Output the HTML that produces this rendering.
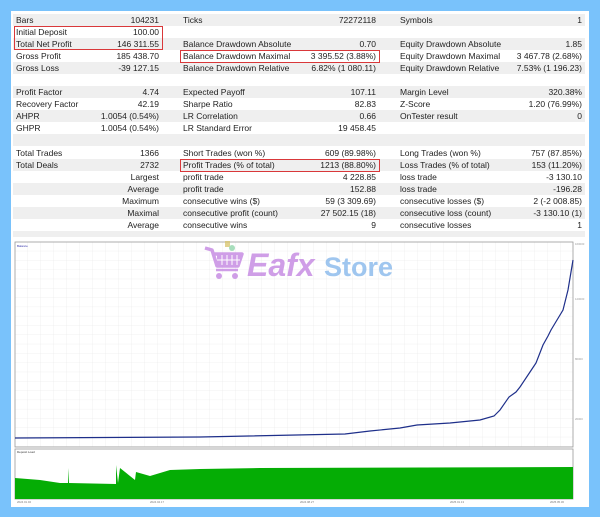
<!DOCTYPE html>
<html><head><style>
*{margin:0;padding:0;box-sizing:border-box}
body{width:600px;height:517px;background:#79c2fb;position:relative;overflow:hidden;font-family:"Liberation Sans",sans-serif;font-size:8.5px;color:#222}
#p{position:absolute;left:11px;top:11px;width:578px;height:496px;background:#fff}
.r{position:absolute;left:13px;width:572px;height:12px;line-height:12px}
.g{background:#efefef}
.r span{position:absolute;white-space:nowrap}
.a{left:3px}.b{right:426px}.c{left:170px}.d{right:209px}.e{left:387px}.f{right:3px}
.box{position:absolute;border:1.3px solid #d9383a}
</style></head><body>
<div id="p"></div>
<div class="r g" style="top:14px"><span class="a">Bars</span><span class="b">104231</span><span class="c">Ticks</span><span class="d">72272118</span><span class="e">Symbols</span><span class="f">1</span></div>
<div class="r" style="top:26px"><span class="a">Initial Deposit</span><span class="b">100.00</span></div>
<div class="r g" style="top:38px"><span class="a">Total Net Profit</span><span class="b">146 311.55</span><span class="c">Balance Drawdown Absolute</span><span class="d">0.70</span><span class="e">Equity Drawdown Absolute</span><span class="f">1.85</span></div>
<div class="r" style="top:50px"><span class="a">Gross Profit</span><span class="b">185 438.70</span><span class="c">Balance Drawdown Maximal</span><span class="d">3 395.52 (3.88%)</span><span class="e">Equity Drawdown Maximal</span><span class="f">3 467.78 (2.68%)</span></div>
<div class="r g" style="top:62px"><span class="a">Gross Loss</span><span class="b">-39 127.15</span><span class="c">Balance Drawdown Relative</span><span class="d">6.82% (1 080.11)</span><span class="e">Equity Drawdown Relative</span><span class="f">7.53% (1 196.23)</span></div>
<div class="r" style="top:74px"></div>
<div class="r g" style="top:86px"><span class="a">Profit Factor</span><span class="b">4.74</span><span class="c">Expected Payoff</span><span class="d">107.11</span><span class="e">Margin Level</span><span class="f">320.38%</span></div>
<div class="r" style="top:98px"><span class="a">Recovery Factor</span><span class="b">42.19</span><span class="c">Sharpe Ratio</span><span class="d">82.83</span><span class="e">Z-Score</span><span class="f">1.20 (76.99%)</span></div>
<div class="r g" style="top:110px"><span class="a">AHPR</span><span class="b">1.0054 (0.54%)</span><span class="c">LR Correlation</span><span class="d">0.66</span><span class="e">OnTester result</span><span class="f">0</span></div>
<div class="r" style="top:122px"><span class="a">GHPR</span><span class="b">1.0054 (0.54%)</span><span class="c">LR Standard Error</span><span class="d">19 458.45</span></div>
<div class="r g" style="top:134px"></div>
<div class="r" style="top:147px"><span class="a">Total Trades</span><span class="b">1366</span><span class="c">Short Trades (won %)</span><span class="d">609 (89.98%)</span><span class="e">Long Trades (won %)</span><span class="f">757 (87.85%)</span></div>
<div class="r g" style="top:159px"><span class="a">Total Deals</span><span class="b">2732</span><span class="c">Profit Trades (% of total)</span><span class="d">1213 (88.80%)</span><span class="e">Loss Trades (% of total)</span><span class="f">153 (11.20%)</span></div>
<div class="r" style="top:171px"><span class="b">Largest</span><span class="c">profit trade</span><span class="d">4 228.85</span><span class="e">loss trade</span><span class="f">-3 130.10</span></div>
<div class="r g" style="top:183px"><span class="b">Average</span><span class="c">profit trade</span><span class="d">152.88</span><span class="e">loss trade</span><span class="f">-196.28</span></div>
<div class="r" style="top:195px"><span class="b">Maximum</span><span class="c">consecutive wins ($)</span><span class="d">59 (3 309.69)</span><span class="e">consecutive losses ($)</span><span class="f">2 (-2 008.85)</span></div>
<div class="r g" style="top:207px"><span class="b">Maximal</span><span class="c">consecutive profit (count)</span><span class="d">27 502.15 (18)</span><span class="e">consecutive loss (count)</span><span class="f">-3 130.10 (1)</span></div>
<div class="r" style="top:219px"><span class="b">Average</span><span class="c">consecutive wins</span><span class="d">9</span><span class="e">consecutive losses</span><span class="f">1</span></div>
<div class="r g" style="top:231px;height:6px"></div>
<div class="box" style="left:14px;top:26px;width:149px;height:24px"></div>
<div class="box" style="left:180px;top:50px;width:200px;height:13px"></div>
<div class="box" style="left:180px;top:159px;width:200px;height:13px"></div>
<svg style="position:absolute;left:0;top:0" width="600" height="517">
<defs><pattern id="gr" width="13" height="9.3" patternUnits="userSpaceOnUse" x="15" y="242"><path d="M13 0V9.3M0 9.3H13" stroke="#e6e6e6" stroke-width="0.6" fill="none"/></pattern></defs>
<rect x="15" y="242" width="558" height="205" fill="url(#gr)" stroke="#999" stroke-width="0.8"/>
<rect x="15" y="449" width="558" height="50" fill="#fff" stroke="#999" stroke-width="0.8"/>
<text x="17" y="247" font-size="3" fill="#33a">Balance</text>
<text x="17" y="453" font-size="3" fill="#333">Deposit Load</text>
<polyline fill="none" stroke="#1e2f8a" stroke-width="1.2" points="15,438 200,437 345,434 370,431 400,428 417,425 450,423 470,421 480,420 494,416 500,410 509,397 516,392 520,387 530,372 536,363 543,345 548,336 551,330 557,320 563,310 568,290 573,260"/>
<path d="M15,478 L40,480 L60,483 L68,483 L68,468 L69,483 L116,484 L116,465 L118,483 L120,468 L135,480 L136,472 L150,476 L170,470 L200,469 L260,468 L573,467 L573,499 L15,499Z" fill="#05ad05"/>
<g fill="#999" font-size="2.8"><text x="575" y="245">160000</text><text x="575" y="300">120000</text><text x="575" y="360">80000</text><text x="575" y="420">20000</text></g>
<g fill="#777" font-size="2.8"><text x="17" y="503">2024.01.02</text><text x="150" y="503">2024.04.17</text><text x="300" y="503">2024.08.27</text><text x="450" y="503">2025.01.13</text><text x="550" y="503">2025.05.30</text></g>
<g opacity="0.75">
<path d="M205,248 L212,250 L217,266 L238,266 L242,254 L214,254" fill="none" stroke="#c07ee0" stroke-width="3.5" stroke-linejoin="round"/>
<rect x="217" y="255" width="23" height="10" fill="#c07ee0"/>
<g stroke="#fff" stroke-width="1"><path d="M222,255V265M227,255V265M232,255V265M237,255V265M217,260H240"/></g>
<path d="M216,270H238" stroke="#c07ee0" stroke-width="2.5"/>
<circle cx="219" cy="276" r="3" fill="#c07ee0"/><circle cx="235" cy="276" r="3" fill="#c07ee0"/>
<rect x="225" y="241" width="5" height="6" fill="#d8c46a"/><circle cx="232" cy="248" r="3" fill="#8cd4a8"/>
<text x="247" y="276" font-size="32" font-weight="bold" font-style="italic" fill="#c07ee0" font-family="Liberation Sans">Eafx</text>
<text x="324" y="276" font-size="27" font-weight="bold" fill="#7fb3ea" font-family="Liberation Sans">Store</text>
</g>
</svg>
</body></html>
